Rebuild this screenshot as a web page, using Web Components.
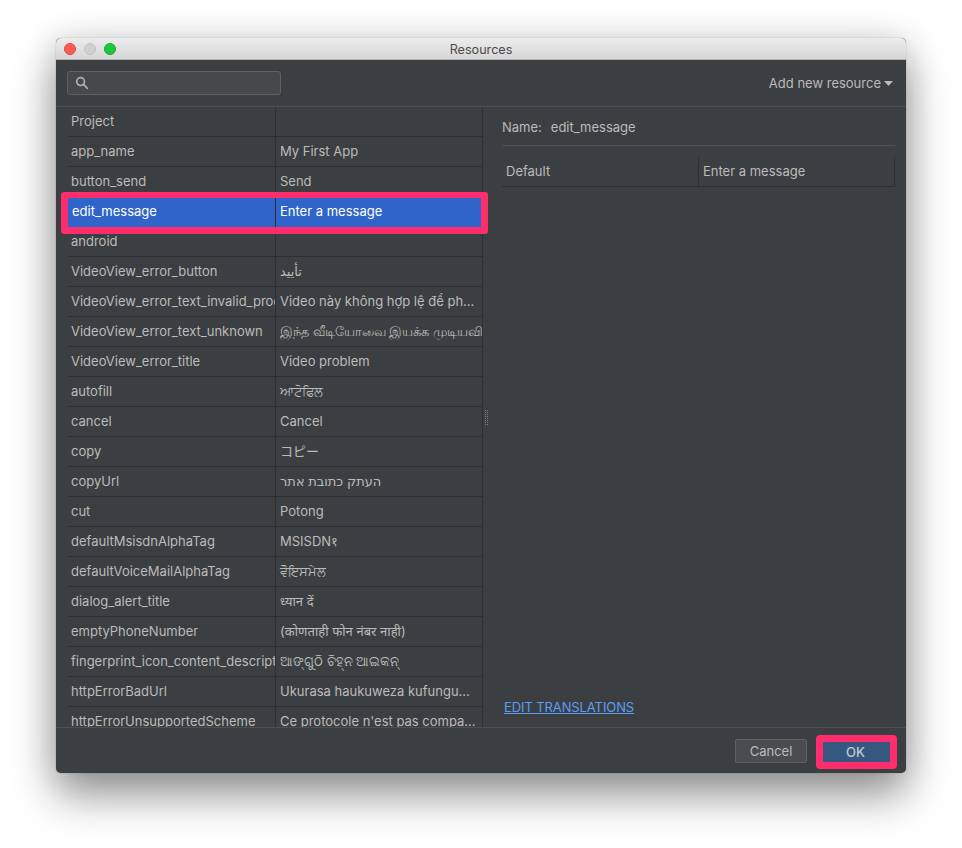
<!DOCTYPE html>
<html>
<head>
<meta charset="utf-8">
<title>Resources</title>
<style>
  html, body { margin: 0; height: 100%; background: #ffffff; }
  body { padding: 38px 56px 0; box-sizing: border-box; font-family: Inter, "Noto Sans", "DejaVu Sans", "Noto Sans CJK JP", sans-serif; font-size: 13px; color: #bbbbbb; }
</style>
</head>
<body>
<res-window title="Resources">
  <res-toolbar slot="toolbar"></res-toolbar>
  <res-table slot="list">
    <res-row name="Project"></res-row>
    <res-row name="app_name">My First App</res-row>
    <res-row name="button_send">Send</res-row>
    <res-row name="edit_message" selected>Enter a message</res-row>
    <res-row name="android"></res-row>
    <res-row name="VideoView_error_button">تأييد</res-row>
    <res-row name="VideoView_error_text_invalid_prog">Video này không hợp lệ để ph...</res-row>
    <res-row name="VideoView_error_text_unknown">இந்த வீடியோவை இயக்க முடியவில்.</res-row>
    <res-row name="VideoView_error_title">Video problem</res-row>
    <res-row name="autofill">ਆਟੋਫਿਲ</res-row>
    <res-row name="cancel">Cancel</res-row>
    <res-row name="copy">コピー</res-row>
    <res-row name="copyUrl">העתק כתובת אתר</res-row>
    <res-row name="cut">Potong</res-row>
    <res-row name="defaultMsisdnAlphaTag">MSISDN१</res-row>
    <res-row name="defaultVoiceMailAlphaTag">ਵੌਇਸਮੇਲ</res-row>
    <res-row name="dialog_alert_title">ध्यान दें</res-row>
    <res-row name="emptyPhoneNumber">(कोणताही फोन नंबर नाही)</res-row>
    <res-row name="fingerprint_icon_content_descript">ଆଙ୍ଗୁଠି ଚିହ୍ନ ଆଇକନ୍</res-row>
    <res-row name="httpErrorBadUrl">Ukurasa haukuweza kufungu...</res-row>
    <res-row name="httpErrorUnsupportedScheme">Ce protocole n'est pas compa...</res-row>
  </res-table>
  <res-detail slot="detail" name="edit_message" value="Enter a message"></res-detail>
  <res-footer slot="footer"></res-footer>
</res-window>

<script>
// window frame: title bar, toolbar, the two panes, footer
class ResWindow extends HTMLElement {
  constructor() {
    super();
    this.attachShadow({ mode: 'open' });
    this.shadowRoot.innerHTML = `
      <style>
        :host {
          display: flex;
          flex-direction: column;
          width: 850px;
          height: 735px;
          background: #3c3f41;
          border-radius: 5px;
          box-shadow: 0 0 1px rgba(0,0,0,.5), 0 22px 44px rgba(0,0,0,.42), 0 0 34px rgba(0,0,0,.12);
          overflow: hidden;
        }
        .title {
          flex: none;
          height: 22px;
          box-sizing: border-box;
          display: flex;
          align-items: center;
          justify-content: center;
          position: relative;
          background: linear-gradient(#ececec, #d6d6d6);
          border-bottom: 1px solid #b4b4b4;
          color: #4a4a4a;
          font-size: 12.6px;
          padding-top: 1px;
        }
        .lights { position: absolute; left: 8px; top: 5px; display: flex; gap: 8px; }
        .lights i { width: 12px; height: 12px; border-radius: 50%; box-sizing: border-box; }
        .close { background: #fc5b57; border: 1px solid #e2463f; }
        .min { background: #d0d0d0; border: 1px solid #c2c2c2; }
        .max { background: #1fc63f; border: 1px solid #14ae2c; }
        .main { flex: 1; display: flex; min-height: 0; }
      </style>
      <div class="title">
        <div class="lights"><i class="close"></i><i class="min"></i><i class="max"></i></div>
        <span id="t"></span>
      </div>
      <slot name="toolbar"></slot>
      <div class="main">
        <slot name="list"></slot>
        <slot name="detail"></slot>
      </div>
      <slot name="footer"></slot>
    `;
    this.shadowRoot.getElementById('t').textContent = this.getAttribute('title') || '';
  }
}

class ResToolbar extends HTMLElement {
  constructor() {
    super();
    this.attachShadow({ mode: 'open' });
    this.shadowRoot.innerHTML = `
      <style>
        :host {
          flex: none;
          display: flex;
          align-items: center;
          justify-content: space-between;
          height: 47px;
          box-sizing: border-box;
          padding: 0 13px 0 11px;
          border-bottom: 1px solid #4d5052;
        }
        .search {
          width: 214px;
          height: 24px;
          box-sizing: border-box;
          display: flex;
          align-items: center;
          padding-left: 7px;
          background: #45494a;
          border: 1px solid #5e6163;
          border-radius: 3px;
        }
        .add { display: flex; align-items: center; gap: 3px; color: #bbbbbb; }
        .add svg { display: block; margin-top: 1px; }
      </style>
      <div class="search">
        <svg width="14" height="14" viewBox="0 0 14 14" fill="none" stroke="#aeb1b3" stroke-width="1.7">
          <circle cx="5.600" cy="5.600" r="3.900"/><path d="M8.400 8.400l4 4" stroke-linecap="round"/>
        </svg>
      </div>
      <div class="add">
        <span>Add new resource</span>
        <svg width="9" height="5" viewBox="0 0 9 5"><path d="M0 0h9L4.500 5z" fill="#bbbbbb"/></svg>
      </div>
    `;
  }
}

// left pane, clipped by the footer line; the selection frame may stick out sideways
class ResTable extends HTMLElement {
  constructor() {
    super();
    this.attachShadow({ mode: 'open' });
    this.shadowRoot.innerHTML = `
      <style>
        :host {
          display: block;
          flex: none;
          width: 427px;
          height: 100%;
          box-sizing: border-box;
          padding-left: 12px;
          clip-path: inset(0 -10px 0 0);
          position: relative;
          z-index: 1;
        }
      </style>
      <slot></slot>
    `;
  }
}

class ResRow extends HTMLElement {
  constructor() {
    super();
    this.attachShadow({ mode: 'open' });
    this.shadowRoot.innerHTML = `
      <style>
        :host {
          display: grid;
          grid-template-columns: 207px 1fr;
          height: 30px;
          box-sizing: border-box;
          border-bottom: 1px solid #2d2f30;
          border-right: 1px solid #2d2f30;
          color: #bbbbbb;
          position: relative;
          line-height: 29px;
        }
        .name, .value { overflow: hidden; white-space: nowrap; min-width: 0; }
        .name { padding-left: 3px; }
        .value { padding-left: 4px; border-left: 1px solid #2d2f30; }
        :host([selected]) {
          background: #2f65ca;
          color: #ffffff;
          border-bottom: 0;
          line-height: 27px;
          margin-top: 1px;
          height: 29px;
          z-index: 1;
        }
        :host([selected]) .name { padding-left: 4px; }
        :host([selected])::after {
          content: '';
          position: absolute;
          left: -7px;
          right: -6px;
          top: -6px;
          bottom: -7px;
          border: solid #ff2d6c;
          border-width: 6px 7px 7px;
          border-radius: 3px;
          pointer-events: none;
        }
      </style>
      <div class="name"></div>
      <div class="value"><slot></slot></div>
    `;
    this.shadowRoot.querySelector('.name').textContent = this.getAttribute('name');
  }
}

// right pane with the translations of the selected resource
class ResDetail extends HTMLElement {
  constructor() {
    super();
    this.attachShadow({ mode: 'open' });
    this.shadowRoot.innerHTML = `
      <style>
        :host {
          flex: 1;
          min-width: 0;
          display: flex;
          flex-direction: column;
          position: relative;
          box-sizing: border-box;
          padding: 0 11px 0 19px;
          color: #bbbbbb;
        }
        .head {
          height: 39px;
          box-sizing: border-box;
          display: flex;
          align-items: center;
          gap: 9px;
          border-bottom: 1px solid #4d5052;
          padding-top: 2px;
        }
        .grid {
          margin-top: 11px;
          height: 30px;
          box-sizing: border-box;
          display: grid;
          grid-template-columns: 196px 1fr;
          line-height: 29px;
          border-bottom: 1px solid #2d2f30;
          border-right: 1px solid #2d2f30;
        }
        .grid div { padding-left: 4px; }
        .grid div + div { border-left: 1px solid #2d2f30; }
        a { margin-top: auto; margin-left: 2px; margin-bottom: 12px; color: #589df6; text-decoration: underline; letter-spacing: -0.1px; }
        .grip { position: absolute; left: 2px; top: 303px; display: block; }
      </style>
      <svg class="grip" width="3" height="15" viewBox="0 0 3 15" fill="#7d7f81">
        <path d="M0 0h1v1H0zM2 0h1v1H2zM0 2h1v1H0zM2 2h1v1H2zM0 4h1v1H0zM2 4h1v1H2zM0 6h1v1H0zM2 6h1v1H2zM0 8h1v1H0zM2 8h1v1H2zM0 10h1v1H0zM2 10h1v1H2zM0 12h1v1H0zM2 12h1v1H2zM0 14h1v1H0zM2 14h1v1H2z"/>
      </svg>
      <div class="head"><span>Name:</span><span id="n"></span></div>
      <div class="grid"><div>Default</div><div id="v"></div></div>
      <a href="#">EDIT TRANSLATIONS</a>
    `;
    this.shadowRoot.getElementById('n').textContent = this.getAttribute('name');
    this.shadowRoot.getElementById('v').textContent = this.getAttribute('value');
  }
}

class ResFooter extends HTMLElement {
  constructor() {
    super();
    this.attachShadow({ mode: 'open' });
    this.shadowRoot.innerHTML = `
      <style>
        :host {
          flex: none;
          height: 46px;
          box-sizing: border-box;
          display: flex;
          align-items: center;
          justify-content: flex-end;
          gap: 9px;
          padding: 1px 9px 0 0;
          border-top: 1px solid #4d5052;
        }
        .btn {
          box-sizing: border-box;
          display: flex;
          align-items: center;
          justify-content: center;
          color: #bbbbbb;
        }
        .cancel { width: 72px; height: 24px; background: #4a4d4f; border: 1px solid #5e6163; border-radius: 2px; }
        .ok {
          width: 81px;
          height: 34px;
          margin-top: 2px;
          padding-right: 2px;
          background: #365880 padding-box;
          border: solid #ff2d6c;
          border-width: 7px;
          border-radius: 4px;
          color: #c2c8cf;
          font-weight: 500;
        }
      </style>
      <div class="btn cancel">Cancel</div>
      <div class="btn ok">OK</div>
    `;
  }
}

customElements.define('res-window', ResWindow);
customElements.define('res-toolbar', ResToolbar);
customElements.define('res-table', ResTable);
customElements.define('res-row', ResRow);
customElements.define('res-detail', ResDetail);
customElements.define('res-footer', ResFooter);
</script>
</body>
</html>
